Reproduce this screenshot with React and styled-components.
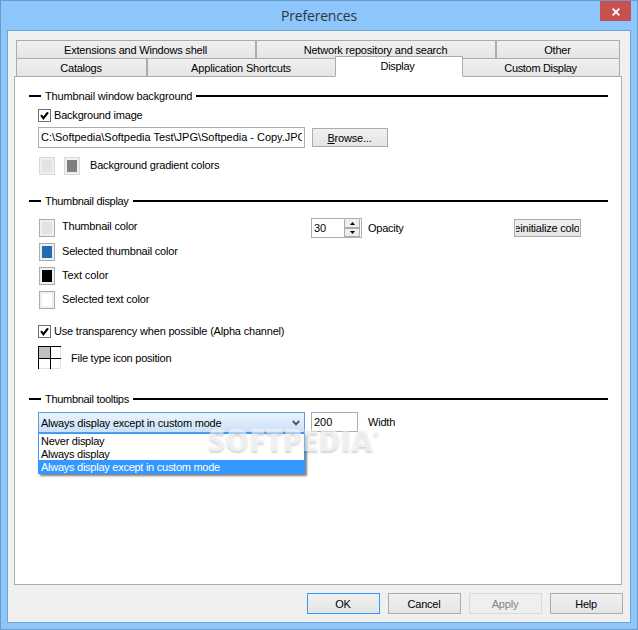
import React, { useState } from "react";
import styled, { createGlobalStyle } from "styled-components";

const tabsBack = [
  { label: "Extensions and Windows shell", width: 240, spacing: -0.2 },
  { label: "Network repository and search", width: 240, spacing: -0.19 },
  { label: "Other", width: 124, spacing: -0.2 },
];

const tabsFront = [
  { label: "Catalogs", width: 131, spacing: -0.27 },
  { label: "Application Shortcuts", width: 189, spacing: -0.17 },
  { label: "Display", width: 128, spacing: -0.3, active: true },
  { label: "Custom Display", width: 158, spacing: -0.33 },
];

const colors = [
  { label: "Thumbnail color", color: "#e3e3e3", shift: -2, spacing: -0.2 },
  { label: "Selected thumbnail color", color: "#236bb2", shift: -1, spacing: -0.2 },
  { label: "Text color", color: "#000000", shift: -1, spacing: -0.08 },
  { label: "Selected text color", color: "#ffffff", shift: -1, spacing: -0.17 },
];

const tooltipModes = [
  "Never display",
  "Always display",
  "Always display except in custom mode",
];

function Tab({ tab, selected, onSelect }) {
  return (
    <TabButton $width={tab.width} $active={selected} onClick={onSelect}>
      <Text $spacing={tab.spacing}>{tab.label}</Text>
    </TabButton>
  );
}

function SectionTitle({ children, spacing }) {
  return (
    <TitleRow>
      <Text $spacing={spacing}>{children}</Text>
    </TitleRow>
  );
}

function Checkbox({ children, defaultChecked, spacing }) {
  const [checked, setChecked] = useState(defaultChecked);

  return (
    <CheckLabel onClick={() => setChecked(!checked)}>
      <CheckBox>
        {checked && (
          <svg width="11" height="11" viewBox="0 0 11 11">
            <path d="M2 5.2L4.4 8.2L9 2.4" fill="none" stroke="#000" strokeWidth="2.1" />
          </svg>
        )}
      </CheckBox>
      <Text $spacing={spacing}>{children}</Text>
    </CheckLabel>
  );
}

export default function App() {
  const [activeTab, setActiveTab] = useState("Display");
  const [mode, setMode] = useState(tooltipModes[2]);

  return (
    <>
      <GlobalStyle />
      <Window>
        <TitleBar>
          <Title>Preferences</Title>
          <CloseButton>
            <svg width="8" height="8" viewBox="0 0 8 8">
              <path d="M0.7 0.7L7.3 7.3M7.3 0.7L0.7 7.3" stroke="#fff" strokeWidth="1.8" />
            </svg>
          </CloseButton>
        </TitleBar>

        <Client>
          <TabRow>
            {tabsBack.map((tab) => (
              <Tab
                key={tab.label}
                tab={tab}
                selected={activeTab === tab.label}
                onSelect={() => setActiveTab(tab.label)}
              />
            ))}
          </TabRow>
          <TabRow>
            {tabsFront.map((tab) => (
              <Tab
                key={tab.label}
                tab={tab}
                selected={activeTab === tab.label}
                onSelect={() => setActiveTab(tab.label)}
              />
            ))}
          </TabRow>

          <Panel>
            <Section $height={105}>
              <SectionTitle spacing={-0.16}>Thumbnail window background</SectionTitle>
              <Body $top={3}>
                <Checkbox defaultChecked spacing={-0.2}>Background image</Checkbox>
                <Row $top={4} $gap={7}>
                  <PathBox>
                    <Text $spacing={-0.02}>C:\Softpedia\Softpedia Test\JPG\Softpedia - Copy.JPG</Text>
                  </PathBox>
                  <Button $width={76} $height={19}>
                    <Text $spacing={-0.2}><u>B</u>rowse...</Text>
                  </Button>
                </Row>
                <Row $top={9} $left={1} $gap={9}>
                  <Swatch $color="#e3e3e3" $faded />
                  <Swatch $color="#808080" $faded />
                  <Label $spacing={-0.18} $left={1} $shift={-1}>Background gradient colors</Label>
                </Row>
              </Body>
            </Section>

            <Section $height={198}>
              <SectionTitle spacing={-0.3}>Thumbnail display</SectionTitle>
              <Body $top={9}>
                <Columns>
                  <ColorList>
                    {colors.map((item) => (
                      <ColorRow key={item.label}>
                        <Swatch $color={item.color} />
                        <Label $spacing={item.spacing} $shift={item.shift}>{item.label}</Label>
                      </ColorRow>
                    ))}
                  </ColorList>
                  <OpacityField>
                    <Spinner>
                      <Text>30</Text>
                      <Arrows>
                        <Arrow>
                          <svg width="5" height="3" viewBox="0 0 5 3"><path d="M0 3L2.5 0L5 3Z" /></svg>
                        </Arrow>
                        <Arrow>
                          <svg width="5" height="3" viewBox="0 0 5 3"><path d="M0 0L2.5 3L5 0Z" /></svg>
                        </Arrow>
                      </Arrows>
                    </Spinner>
                    <Text $spacing={-0.27}>Opacity</Text>
                  </OpacityField>
                  <ResetButton $width={67} $height={18}>
                    <Text $spacing={-0.2}>Reinitialize colors</Text>
                  </ResetButton>
                </Columns>
                <Row $top={14}>
                  <Checkbox defaultChecked spacing={-0.19}>
                    Use transparency when possible (Alpha channel)
                  </Checkbox>
                </Row>
                <Row $top={7} $gap={10}>
                  <CornerPicker>
                    <Corner $selected />
                    <Corner />
                    <Corner />
                    <Corner />
                  </CornerPicker>
                  <Text $spacing={-0.24}>File type icon position</Text>
                </Row>
              </Body>
            </Section>

            <Section>
              <SectionTitle spacing={-0.3}>Thumbnail tooltips</SectionTitle>
              <Body $top={5}>
                <FieldRow>
                  <Combo>
                    <Text $spacing={-0.22}>{mode}</Text>
                    <svg width="8" height="6" viewBox="0 0 8 6">
                      <path d="M0.8 1L4 4.3L7.2 1" fill="none" stroke="#505050" strokeWidth="1.9" />
                    </svg>
                    <Options>
                      {tooltipModes.map((item) => (
                        <Option key={item} $selected={item === mode} onClick={() => setMode(item)}>
                          <Text $spacing={-0.26}>{item}</Text>
                        </Option>
                      ))}
                    </Options>
                  </Combo>
                  <WidthBox>
                    <Text>200</Text>
                  </WidthBox>
                  <WidthLabel $left={4} $spacing={-0.2}>Width</WidthLabel>
                </FieldRow>
              </Body>
            </Section>
          </Panel>

          <Footer>
            <Button $width={73} $height={21} $primary><Text $spacing={-0.1}>OK</Text></Button>
            <Button $width={73} $height={21}><Text $spacing={-0.2}>Cancel</Text></Button>
            <Button $width={73} $height={21} disabled><Text $spacing={-0.2}>Apply</Text></Button>
            <Button $width={73} $height={21}><Text $spacing={-0.25}>Help</Text></Button>
          </Footer>
        </Client>

        <Watermark>SOFTPEDIA<sup>®</sup></Watermark>
      </Window>
    </>
  );
}

const GlobalStyle = createGlobalStyle`
  body {
    margin: 0;
  }

  * {
    box-sizing: border-box;
  }

  svg {
    display: block;
    flex: none;
  }
`;

const Window = styled.div`
  position: relative;
  width: 638px;
  height: 630px;
  padding: 0 6px;
  border: 1px solid #6b9ac6;
  background: #8dc6fa;
  color: #000;
  font-family: "Liberation Sans", Arial, sans-serif;
  font-size: 11px;
  line-height: 16px;
  overflow: hidden;
`;

const TitleBar = styled.header`
  display: flex;
  justify-content: flex-end;
  align-items: flex-start;
  height: 29px;
`;

const Title = styled.div`
  flex: 1;
  padding-left: 31px;
  color: #2b3640;
  font-family: "Open Sans", sans-serif;
  font-size: 14px;
  letter-spacing: -0.2px;
  line-height: 29px;
  text-align: center;
`;

const CloseButton = styled.button`
  display: flex;
  align-items: center;
  justify-content: center;
  width: 31px;
  height: 20px;
  padding: 1px 0 0;
  border: none;
  background: #c75050;
`;

const Client = styled.main`
  width: 624px;
  height: 593px;
  padding: 9px 0 0 6px;
  border: 1px solid #6fa6da;
  background: #f0f0f0;
`;

const Text = styled.span`
  letter-spacing: ${({ $spacing = 0 }) => $spacing}px;
  white-space: pre;
`;

const Label = styled(Text)`
  margin-left: ${({ $left = 0 }) => $left}px;
  padding-bottom: ${({ $shift = 0 }) => $shift * -2}px;
`;

const TabRow = styled.div`
  display: flex;
  width: 604px;
  height: 18px;
  margin-left: 2px;
`;

const TabButton = styled.button`
  display: flex;
  align-items: center;
  justify-content: center;
  width: ${({ $width }) => $width}px;
  height: ${({ $active }) => ($active ? 21 : 19)}px;
  margin: ${({ $active }) => ($active ? "-2px -1px 0" : "0")};
  padding: ${({ $active }) => ($active ? "0 3px 1px 0" : "1px 1px 0 0")};
  border: 1px solid #acacac;
  border-bottom-color: ${({ $active }) => ($active ? "#fff" : "#acacac")};
  background: ${({ $active }) => ($active ? "#fff" : "linear-gradient(#f0f0f0, #e5e5e5)")};
  z-index: ${({ $active }) => ($active ? 1 : 0)};
  color: inherit;
  font: inherit;
`;

const Panel = styled.div`
  width: 608px;
  height: 509px;
  padding: 11px 13px 0 14px;
  border: 1px solid #acacac;
  background: #fff;
`;

const Section = styled.section`
  height: ${({ $height }) => ($height ? `${$height}px` : "auto")};
`;

const TitleRow = styled.div`
  display: flex;
  align-items: center;
  gap: 4px;
  height: 16px;

  &::before,
  &::after {
    content: "";
    width: 12px;
    height: 2px;
    background: #000;
  }

  &::after {
    flex: 1;
  }
`;

const Body = styled.div`
  padding: ${({ $top }) => $top}px 0 0 9px;
`;

const Row = styled.div`
  display: flex;
  align-items: center;
  gap: ${({ $gap = 0 }) => $gap}px;
  margin: ${({ $top = 0 }) => $top}px 0 0 ${({ $left = 0 }) => $left}px;
`;

const FieldRow = styled.div`
  display: flex;
  align-items: flex-start;
  gap: 6px;
`;

const CheckLabel = styled.div`
  display: flex;
  align-items: center;
  gap: 3px;
  height: 16px;
`;

const CheckBox = styled.span`
  width: 13px;
  height: 13px;
  border: 1px solid #707070;
  background: #fff;
`;

const PathBox = styled.div`
  width: 267px;
  height: 21px;
  padding: 1px 2px;
  border: 1px solid #abadb3;
  overflow: hidden;

  ${Text} {
    display: block;
    overflow: hidden;
  }
`;

const Button = styled.button`
  display: flex;
  align-items: center;
  justify-content: center;
  width: ${({ $width }) => $width}px;
  height: ${({ $height }) => $height}px;
  padding: 1px 1px 0 0;
  border: 1px solid ${({ $primary }) => ($primary ? "#3399ff" : "#acacac")};
  background: linear-gradient(#f0f0f0, #e5e5e5);
  color: #000;
  font: inherit;

  &:disabled {
    border-color: #d9d9d9;
    background: #efefef;
    color: #838383;
  }
`;

const ResetButton = styled(Button)`
  overflow: hidden;
  padding: 0 1px;
  margin-top: 1px;

  ${Text} {
    display: flex;
    justify-content: center;
    width: 64px;
    overflow: hidden;
  }
`;

const Swatch = styled.span`
  width: 16px;
  height: 18px;
  border: 1px solid ${({ $faded }) => ($faded ? "#d9d9d9" : "#acacac")};
  background: ${({ $color }) => $color};
  box-shadow: inset 0 0 0 2px #efefef;
`;

const Columns = styled.div`
  display: flex;
  align-items: flex-start;
`;

const ColorList = styled.div`
  display: flex;
  flex-direction: column;
  gap: 6px;
  width: 273px;
  padding: 1px 0 0 1px;
`;

const ColorRow = styled.div`
  display: flex;
  align-items: center;
  gap: 7px;
  height: 18px;
`;

const OpacityField = styled.div`
  display: flex;
  align-items: center;
  gap: 6px;
  width: 203px;
`;

const Spinner = styled.div`
  display: flex;
  align-items: center;
  justify-content: space-between;
  width: 51px;
  height: 20px;
  padding: 0 1px 0 2px;
  border: 1px solid #abadb3;
`;

const Arrows = styled.div`
  display: flex;
  flex-direction: column;
  width: 16px;
`;

const Arrow = styled.span`
  display: flex;
  align-items: center;
  justify-content: center;
  height: 9px;
  border: 1px solid #acacac;
  background: #eee;

  &:first-child {
    border-top-color: #eee;
  }
`;

const CornerPicker = styled.div`
  display: grid;
  grid-template-columns: 11px 10px;
  grid-template-rows: 11px 10px;
  gap: 1px;
  width: 23px;
  height: 23px;
  padding: 1px 0 0 1px;
  background: #000;
`;

const Corner = styled.span`
  background: ${({ $selected }) => ($selected ? "#c0c0c0" : "#fff")};

  &:nth-child(even) {
    border-right: 1px solid #e3e3e3;
  }

  &:nth-child(n + 3) {
    border-bottom: 1px solid #e3e3e3;
  }
`;

const Combo = styled.div`
  position: relative;
  display: flex;
  align-items: center;
  justify-content: space-between;
  width: 267px;
  height: 21px;
  padding: 1px 4px 0 2px;
  border: 1px solid #569de5;
  background: linear-gradient(#ebf4fc, #c9e1f8);
`;

const Options = styled.div`
  position: absolute;
  top: 20px;
  left: -1px;
  width: 267px;
  border: 1px solid #3399ff;
  background: #fff;
  box-shadow: 2px 2px 2px rgba(0, 0, 0, 0.5);
`;

const Option = styled.div`
  height: 13px;
  padding-left: 2px;
  background: ${({ $selected }) => ($selected ? "#3399ff" : "#fff")};
  color: ${({ $selected }) => ($selected ? "#fff" : "#000")};
  line-height: 14px;
`;

const WidthBox = styled.div`
  width: 47px;
  height: 20px;
  padding: 1px 2px;
  border: 1px solid #abadb3;
`;

const WidthLabel = styled(Label)`
  padding-top: 2px;
`;

const Footer = styled.footer`
  display: flex;
  justify-content: flex-end;
  gap: 8px;
  padding: 8px 7px 0 0;
`;

/* Faint embossed mark lying over the combo box */
const Watermark = styled.div`
  position: absolute;
  top: 422px;
  left: 207px;
  color: rgba(255, 255, 255, 0.6);
  font-family: "Open Sans", sans-serif;
  font-size: 30px;
  font-weight: 800;
  line-height: 34px;
  text-shadow: 0 2px 2px rgba(0, 0, 0, 0.16);
  pointer-events: none;

  sup {
    font-size: 7px;
    line-height: 0;
    vertical-align: 15px;
  }
`;
